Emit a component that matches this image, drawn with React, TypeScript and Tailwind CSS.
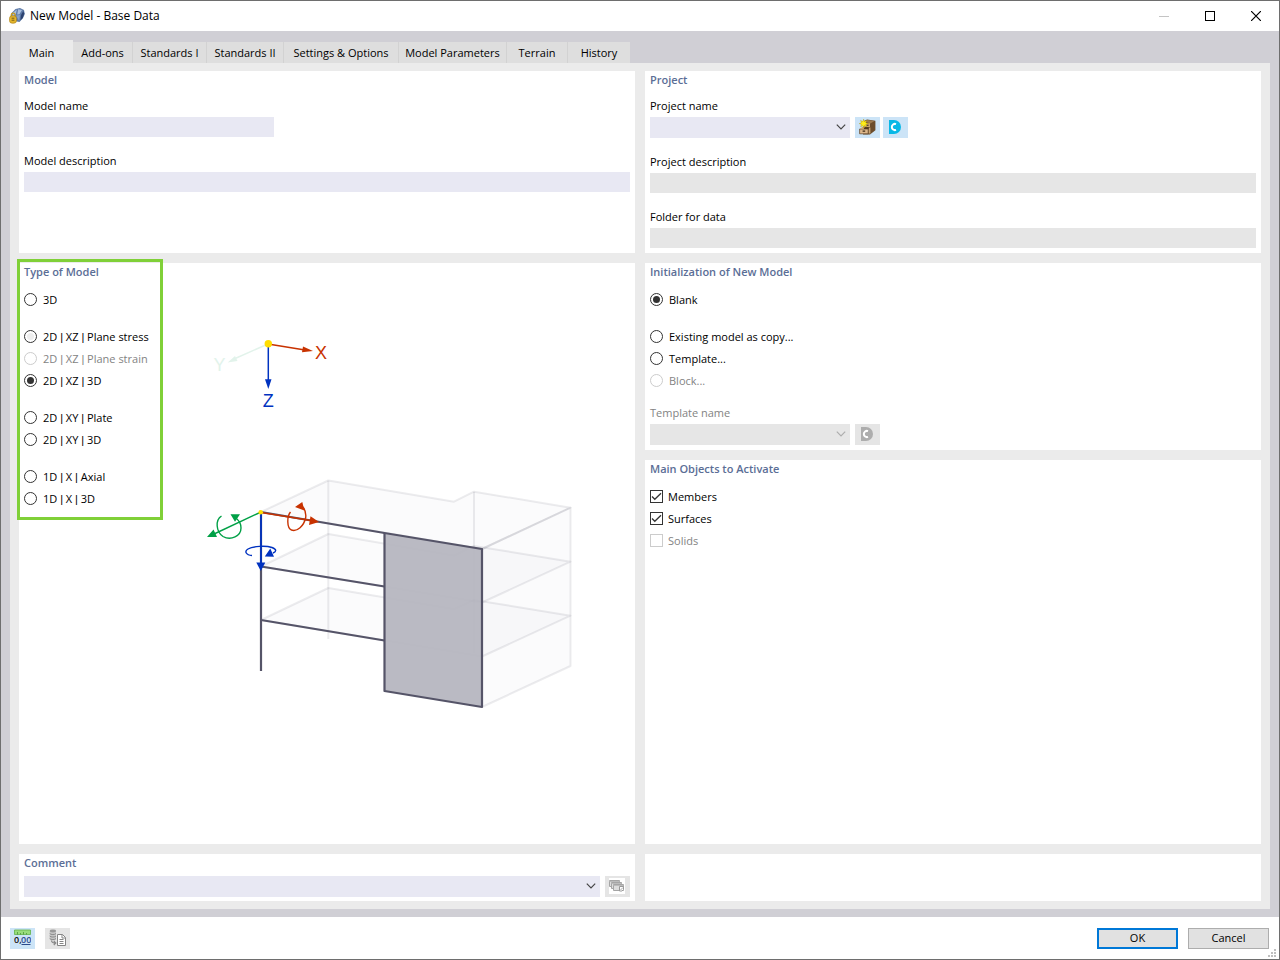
import { Fragment, useState, type ReactNode } from "react";
import clsx from "clsx";

const TABS = [
  { name: "Main", width: "w-[63px]" },
  { name: "Add-ons", width: "w-[60px]" },
  { name: "Standards I", width: "w-[74px]" },
  { name: "Standards II", width: "w-[77px]" },
  { name: "Settings & Options", width: "w-[115px]" },
  { name: "Model Parameters", width: "w-[108px]" },
  { name: "Terrain", width: "w-[61px]" },
  { name: "History", width: "w-[62px]" },
];

type Option = { label: string; disabled?: boolean; hinted?: boolean };

const MODEL_TYPES: Option[][] = [
  [{ label: "3D" }],
  [
    { label: "2D | XZ | Plane stress", hinted: true },
    { label: "2D | XZ | Plane strain", disabled: true },
    { label: "2D | XZ | 3D" },
  ],
  [{ label: "2D | XY | Plate" }, { label: "2D | XY | 3D" }],
  [{ label: "1D | X | Axial" }, { label: "1D | X | 3D" }],
];

const INIT_OPTIONS: Option[][] = [
  [{ label: "Blank" }],
  [
    { label: "Existing model as copy..." },
    { label: "Template..." },
    { label: "Block...", disabled: true },
  ],
];

const Card = ({ className, children }: { className?: string; children?: ReactNode }) => (
  <section className={clsx("bg-white px-[5px] pt-px", className)}>{children}</section>
);

const Heading = ({ children }: { children: ReactNode }) => (
  <h2 className="text-[11px] leading-4 font-semibold text-[#5b6e96]">{children}</h2>
);

const FieldLabel = ({ id, disabled, children }: { id: string; disabled?: boolean; children: ReactNode }) => (
  <label htmlFor={id} className={clsx("mb-[3px] block leading-4", disabled && "text-[#838383]")}>
    {children}
  </label>
);

const Chevron = () => (
  <svg viewBox="0 0 10 6" className="pointer-events-none absolute right-1 top-[7px] h-[6px] w-[10px]" fill="none">
    <path d="M0.8 0.6 5 4.8 9.2 0.6" stroke="currentColor" strokeWidth="1.2" />
  </svg>
);

const SelectBox = ({ id, disabled, className }: { id: string; disabled?: boolean; className?: string }) => (
  <div className={clsx("relative h-[21px]", disabled ? "text-[#adadad]" : "text-[#444]", className)}>
    <select
      id={id}
      disabled={disabled}
      className={clsx("block h-full w-full appearance-none px-1 outline-none", disabled ? "bg-[#e6e6e6]" : "bg-[#e8e8f3]")}
    >
      <option value=""></option>
    </select>
    <Chevron />
  </div>
);

const IconButton = ({ label, active, disabled, children }: { label: string; active?: boolean; disabled?: boolean; children: ReactNode }) => (
  <button
    type="button"
    aria-label={label}
    disabled={disabled}
    className={clsx("flex h-[21px] w-[25px] shrink-0 items-center justify-center pr-px pb-px", active ? "bg-[#cce4f7]" : "bg-[#e5e5e5]")}
  >
    {children}
  </button>
);

// The bar glyph of Open Sans is very wide, so the separators get a narrower one
const OptionText = ({ label }: { label: string }) => (
  <span>
    {label.split("|").map((part, i) => (
      <Fragment key={i}>
        {i > 0 && <span className="font-['Liberation_Sans',sans-serif]">|</span>}
        {part}
      </Fragment>
    ))}
  </span>
);

const RadioList = ({ name, groups, value, onChange }: { name: string; groups: Option[][]; value: string; onChange: (v: string) => void }) => (
  <div className="mt-[9px] flex flex-col gap-[15px]">
    {groups.map((group) => (
      <div key={group[0].label}>
        {group.map(({ label, disabled, hinted }) => (
          <label key={label} className={clsx("flex h-[22px] items-center gap-[6px] whitespace-nowrap", disabled && "text-[#838383]")}>
            <input
              type="radio"
              name={name}
              checked={value === label}
              disabled={disabled}
              onChange={() => onChange(label)}
              className={clsx(
                "mb-px grid size-[13px] shrink-0 appearance-none place-items-center rounded-full border border-[#333] bg-white before:size-[7px] before:rounded-full checked:before:bg-[#333] disabled:border-[#ccc]",
                hinted && "before:bg-[#eee]"
              )}
            />
            <OptionText label={label} />
          </label>
        ))}
      </div>
    ))}
  </div>
);

const CheckItem = ({ label, checked, disabled }: { label: string; checked?: boolean; disabled?: boolean }) => (
  <label className={clsx("flex h-[22px] items-center gap-[5px]", disabled && "text-[#838383]")}>
    <span className="relative mb-px size-[13px]">
      <input
        type="checkbox"
        defaultChecked={checked}
        disabled={disabled}
        className="peer block size-[13px] appearance-none border border-[#333] bg-white disabled:border-[#ccc]"
      />
      <svg viewBox="0 0 13 13" className="pointer-events-none absolute inset-0 hidden size-[13px] peer-checked:block" fill="none">
        <path d="M2 6.5 4.8 9.3 11 3.2" stroke="#333" strokeWidth="1.3" />
      </svg>
    </span>
    {label}
  </label>
);

const AppIcon = () => (
  <svg viewBox="0 0 16 16" className="size-4">
    <path d="M2.6 5 6.5 1 11 0l4 2 .8 4-1.800 4-3.500 4L5 13 1.500 9z" fill="#5f7ba8" />
    <path d="M4 4.800 7.800 1.600l-1 4.700L3 9zM9.200 1.200l3.800.8-2.600 4.200-2.200.2z" fill="#a9bfde" />
    <path d="M14.300 3 12 7l-.6 5.600 2.400-2.600 1.400-4.600z" fill="#2e4370" />
    <path d="M7 7.500 11 7l-.8 6" fill="#86a0c8" />
    <path d="M2.300 8.400V7a1.900 1.900 0 0 1 3.800 0v1.400" fill="none" stroke="#c79a1c" strokeWidth="1.300" />
    <rect x=".5" y="7.800" width="7" height="7.400" rx="2.600" fill="#e3b52c" stroke="#a77c12" strokeWidth=".6" />
    <path d="M2.600 10.200h2.800M2.600 12.200h2.800" stroke="#6b5312" strokeWidth=".9" />
  </svg>
);

const CabinetIcon = () => (
  <svg viewBox="0 0 17 16" className="h-4 w-[17px]">
    <path d="M4 2.500 8 .4l8.400 1.400v9.400L11 15.600H4z" fill="#6b4d2c" />
    <path d="M5 2.600 8.400.9l7 1.100-4 2.400z" fill="#9c7a50" />
    <path d="M5 4.200h6v4H5z" fill="#c9a271" />
    <path d="M5 8.200h6v2H5z" fill="#49321a" />
    <path d="M.6 10h8.600v4.800H.6z" fill="#dcb68a" stroke="#5a4025" strokeWidth=".7" />
    <path d="m.8 10 2.400-2h2.600L4.600 10z" fill="#c9a271" />
    <path d="M10.600 8.500v6" stroke="#c9a271" strokeWidth="1.600" />
    <path d="M3.600 11.600h2.600v1.200H3.600zM7.600 5.800h2v1h-2z" fill="#3b2812" />
    <path d="m4.600.2.8 2.400L7.600 1.400 6.800 3.800l2.400.8-2.400.8.8 2.400-2.200-1.200-.8 2.200-.8-2.200-2.200 1.200.8-2.400L.2 4.600l2.200-.8L1.600 1.400l2.200 1.200z" fill="#ffee18" stroke="#a98b08" strokeWidth=".4" />
  </svg>
);

const CenterIcon = ({ className }: { className?: string }) => (
  <svg viewBox="0 0 12 14" className={clsx("mr-px h-[14px] w-3", className)}>
    <path d="M0 0h5a7 7 0 0 1 0 14H0z" fill="currentColor" />
    <path d="M7 4.1A3.1 3.1 0 1 0 7 9.900" fill="none" stroke="white" strokeWidth="2" />
  </svg>
);

const CommentsIcon = () => (
  <svg viewBox="0 0 16 16" className="size-4 bg-white">
    <path d="M.5 2.500h10v6H.5z" fill="#ddd" stroke="#a5a5a5" />
    <path d="M.5 3.500h10" stroke="#bbb" />
    <path d="M2.500 4.500h10v6h-10z" fill="#ddd" stroke="#a5a5a5" />
    <path d="M2.500 5.500h10" stroke="#bbb" />
    <path d="M4.500 6.500h10v6h-10z" fill="#ddd" stroke="#a5a5a5" />
    <path d="M4.500 7.500h10" stroke="#bbb" />
    <path d="M10.500 8.500h4v3L13 13h-2.500z" fill="#fff" stroke="#999" />
    <path d="m11.500 12 2.500-2.500" stroke="#aaa" />
  </svg>
);

const UnitsIcon = () => (
  <svg viewBox="0 0 17 17" className="h-[17px] w-[17px]">
    <path d="M.5 1h16v4.500H.5z" fill="#98dc7c" stroke="#62b34a" strokeWidth=".8" />
    <path d="M3.500 3v2.500M6.500 4v1.500M9.500 3v2.500M12.500 4v1.500" stroke="#4d9438" strokeWidth=".8" />
    <text x="0" y="14" fontSize="9" fontWeight="600" fill="#111">
      0,
    </text>
    <text x="7" y="14" fontSize="9" fontWeight="600" fill="#2b4a8c">
      00
    </text>
    <path d="M7.500 15.500h9" stroke="#2b4a8c" />
  </svg>
);

const TransferIcon = () => (
  <svg viewBox="0 0 17 17" className="h-[17px] w-[17px]" fill="none">
    <path d="M.7 2v8c0 1 1.300 1.500 3.100 1.500S7 11 7 10V2z" fill="#c6c6c6" />
    <ellipse cx="3.900" cy="2" rx="3.100" ry="1.400" fill="#999" />
    <path d="M.7 4.500c1 1.400 5.300 1.400 6.300 0M.7 7c1 1.400 5.300 1.400 6.300 0M.7 9.500c1 1.400 5.300 1.400 6.300 0" stroke="#8a8a8a" />
    <path d="M2.500 11.500c0 2 1.300 2.500 4 2.500M4.800 12l2 2-2 2" stroke="#8a8a8a" strokeWidth="1.200" />
    <path d="M8.500 5.500h5l3 3v8h-8z" fill="#fff" stroke="#858585" />
    <path d="M13 5.500V9h3.500M10.500 10.500h4M10.500 12.500h4M10.500 14.500h4" stroke="#858585" />
  </svg>
);

// Axis cross on top, building with the active XZ plane below
const ModelPreview = () => (
  <svg viewBox="203 333 374 380" className="mt-[70px] ml-10 h-[380px] w-[374px] shrink-0" fill="none" role="img" aria-label="Model preview">
    <g fontFamily="Liberation Sans, Arial, sans-serif" fontSize="18" textAnchor="middle">
      <path d="M268 344 234 359" stroke="#e2f3eb" strokeWidth="1.500" />
      <path d="m227.700 362.500 7.300-6.500 2.500 5z" fill="#e2f3eb" />
      <text x="219.500" y="371" fill="#e2f3eb">Y</text>
      <path d="m268 344 37 6" stroke="#c83200" strokeWidth="1.500" />
      <path d="m303 346.500 10 4.500-11 1.300z" fill="#c83200" />
      <text x="321" y="359" fill="#c83200">X</text>
      <path d="M268.300 344v37" stroke="#0032c0" strokeWidth="1.500" />
      <path d="M265 379.300h6.500l-3.200 9.700z" fill="#0032c0" />
      <text x="268.300" y="407" fill="#0032c0">Z</text>
      <circle cx="268.300" cy="343.700" r="3.700" fill="#ffdd00" />
    </g>

    <g stroke="#606070" strokeOpacity=".12" strokeWidth="2" fill="#606070" fillOpacity=".022" strokeLinejoin="round">
      <path d="M261 512 328.300 480.500 454 501.700 474 491.700 570.500 507.700 482 549z" />
      <path d="M261 566.500 328.300 534 454 555.500 474 546 570.500 561.700 482 602.500z" />
      <path d="M261 620 328.300 588 454 609 474 600 570.500 615.700 482 656.500z" />
      <path d="M482 549 570.500 507.700V666L482 707z" />
      <path d="M328.300 480.500V639M474 491.700V653" />
    </g>

    <path d="M384.500 533 482 549V707L384.500 691z" fill="#b4b4be" fillOpacity=".92" />
    <g stroke="#555468" strokeWidth="2.200" strokeLinejoin="round">
      <path d="M384.500 533 482 549V707L384.500 691z" />
      <path d="M261 512 384.500 533M261 566.500l123.500 20M261 620l123.500 20.500M261 512V671" />
    </g>

    <g stroke="#00a046" strokeWidth="1.400">
      <path d="M261 512 213 534.500" />
      <path d="M221.500 516C215 520 216 532 223 536.500 231 541 241 536 241 528 241 524 239 520 235 517.500" />
      <path d="m207 537 6.500-7.500 3.500 7.500zM230.500 514.300h9.500l-5 7.500z" fill="#00a046" stroke="none" />
    </g>
    <g stroke="#c83200" strokeWidth="1.400">
      <path d="m261 512.500 50 8" />
      <path d="M290.500 512C287 516 286.500 528 291.500 530 297 532 304 526 305.700 517.500 306.300 512 305 509 302 506" />
      <path d="m310.500 516.300 8.500 5.700-10 3zM302.300 502l-7.300 5 9.300 3.500z" fill="#c83200" stroke="none" />
    </g>
    <g stroke="#0032c0" strokeWidth="1.400">
      <path d="M261 513v51" strokeWidth="1.800" />
      <path d="M252 555.500C246 555 244 551.500 248 549 253 546 266 545.500 272 547.500 277 549.500 276.500 551.500 273 553" />
      <path d="M256.300 562.500h9L260.800 571zM264.800 556.500l5.500-8L274 556.700z" fill="#0032c0" stroke="none" />
    </g>
    <circle cx="260.700" cy="512.300" r="2.300" fill="#ffdd00" />
  </svg>
);

const TitleBar = () => (
  <header className="flex h-[30px] items-center bg-white pl-2">
    <AppIcon />
    <h1 className="ml-[5px] flex-1 text-[12px]">New Model - Base Data</h1>
    <button type="button" aria-label="Minimize" disabled className="grid h-full w-[46px] place-items-center">
      <span className="h-px w-[10px] bg-[#c4c4c4]" />
    </button>
    <button type="button" aria-label="Maximize" className="grid h-full w-[46px] place-items-center">
      <span className="size-[10px] border border-black" />
    </button>
    <button type="button" aria-label="Close" className="grid h-full w-[46px] place-items-center">
      <svg viewBox="0 0 10 10" className="size-[10px]">
        <path d="m0 0 10 10M10 0 0 10" stroke="black" strokeWidth="1.200" />
      </svg>
    </button>
  </header>
);

export default function App() {
  const [tab, setTab] = useState("Main");
  const [modelType, setModelType] = useState("2D | XZ | 3D");
  const [init, setInit] = useState("Blank");

  return (
    <div className="flex min-h-screen flex-col border border-[#6e6e6e] bg-white font-['Open_Sans','Noto_Sans',sans-serif] text-[11px] text-black">
      <TitleBar />

      <main className="flex flex-1 flex-col bg-[#d0cfd5] px-[9px] pt-[9px] pb-2">
        <div role="tablist" className="flex h-[23px] items-end">
          {TABS.map(({ name, width }) => (
            <button
              key={name}
              type="button"
              role="tab"
              aria-selected={tab === name}
              onClick={() => setTab(name)}
              className={clsx(
                "whitespace-nowrap",
                width,
                tab === name
                  ? "h-[23px] bg-[#ebebeb] pt-[3px]"
                  : "h-[21px] border-r border-[#d2d2d2] bg-[#dedede] pt-px last:border-0"
              )}
            >
              {name}
            </button>
          ))}
        </div>

        <div className="grid flex-1 grid-cols-2 grid-rows-[auto_1fr_auto] gap-[10px] bg-[#ebebeb] px-[9px] py-2">
          <Card>
            <Heading>Model</Heading>
            <div className="mt-[10px]">
              <FieldLabel id="model-name">Model name</FieldLabel>
              <input id="model-name" type="text" className="block h-5 w-[250px] bg-[#e8e8f3] px-1 outline-none" />
            </div>
            <div className="mt-4">
              <FieldLabel id="model-description">Model description</FieldLabel>
              <input id="model-description" type="text" className="block h-5 w-full bg-[#e8e8f3] px-1 outline-none" />
            </div>
          </Card>

          <Card className="pb-[5px]">
            <Heading>Project</Heading>
            <div className="mt-[10px]">
              <FieldLabel id="project-name">Project name</FieldLabel>
              <div className="flex">
                <SelectBox id="project-name" className="mr-[5px] w-[200px]" />
                <div className="flex gap-[3px]">
                  <IconButton label="New project" active>
                    <CabinetIcon />
                  </IconButton>
                  <IconButton label="Dlubal Center" active>
                    <CenterIcon className="text-[#08b8e6]" />
                  </IconButton>
                </div>
              </div>
            </div>
            <div className="mt-4">
              <FieldLabel id="project-description">Project description</FieldLabel>
              <input id="project-description" type="text" disabled className="block h-5 w-full bg-[#e6e6e6] px-1" />
            </div>
            <div className="mt-4">
              <FieldLabel id="folder">Folder for data</FieldLabel>
              <input id="folder" type="text" disabled className="block h-5 w-full bg-[#e6e6e6] px-1" />
            </div>
          </Card>

          <section className="flex items-start bg-white">
            <div className="relative w-36 shrink-0 pt-px pb-[10px] pl-[5px]">
              <span className="pointer-events-none absolute -top-1 right-0 bottom-0 -left-[2px] border-3 border-[#80d038]" />
              <Heading>Type of Model</Heading>
              <RadioList name="model-type" groups={MODEL_TYPES} value={modelType} onChange={setModelType} />
            </div>
            <ModelPreview />
          </section>

          <div className="flex flex-col gap-[10px]">
            <Card className="pb-[5px]">
              <Heading>Initialization of New Model</Heading>
              <RadioList name="init" groups={INIT_OPTIONS} value={init} onChange={setInit} />
              <div className="mt-[13px]">
                <FieldLabel id="template" disabled>
                  Template name
                </FieldLabel>
                <div className="flex gap-[5px]">
                  <SelectBox id="template" disabled className="w-[200px]" />
                  <IconButton label="Choose template" disabled>
                    <CenterIcon className="text-[#adadad]" />
                  </IconButton>
                </div>
              </div>
            </Card>

            <Card className="flex-1">
              <Heading>Main Objects to Activate</Heading>
              <div className="mt-[9px]">
                <CheckItem label="Members" checked />
                <CheckItem label="Surfaces" checked />
                <CheckItem label="Solids" disabled />
              </div>
            </Card>
          </div>

          <Card className="pb-1">
            <Heading>
              <label htmlFor="comment">Comment</label>
            </Heading>
            <div className="mt-[5px] flex gap-[5px]">
              <SelectBox id="comment" className="flex-1" />
              <IconButton label="Comment templates" disabled>
                <CommentsIcon />
              </IconButton>
            </div>
          </Card>

          <Card />
        </div>
      </main>

      <footer className="relative flex h-[42px] items-center gap-[10px] pr-[10px] pl-[9px]">
        <IconButton label="Units and decimal places" active>
          <UnitsIcon />
        </IconButton>
        <IconButton label="Copy settings" disabled>
          <TransferIcon />
        </IconButton>
        <button type="button" className="ml-auto h-[21px] w-[81px] border-2 border-[#0078d7] bg-[#e1e1e1]">
          OK
        </button>
        <button type="button" className="h-[21px] w-[81px] border border-[#adadad] bg-[#e1e1e1]">
          Cancel
        </button>
        <svg viewBox="0 0 8 8" className="absolute right-[3px] bottom-[2px] size-2" fill="#bfbfbf">
          <path d="M6 0h2v2H6zM6 3h2v2H6zM6 6h2v2H6zM3 3h2v2H3zM3 6h2v2H3zM0 6h2v2H0z" />
        </svg>
      </footer>
    </div>
  );
}
